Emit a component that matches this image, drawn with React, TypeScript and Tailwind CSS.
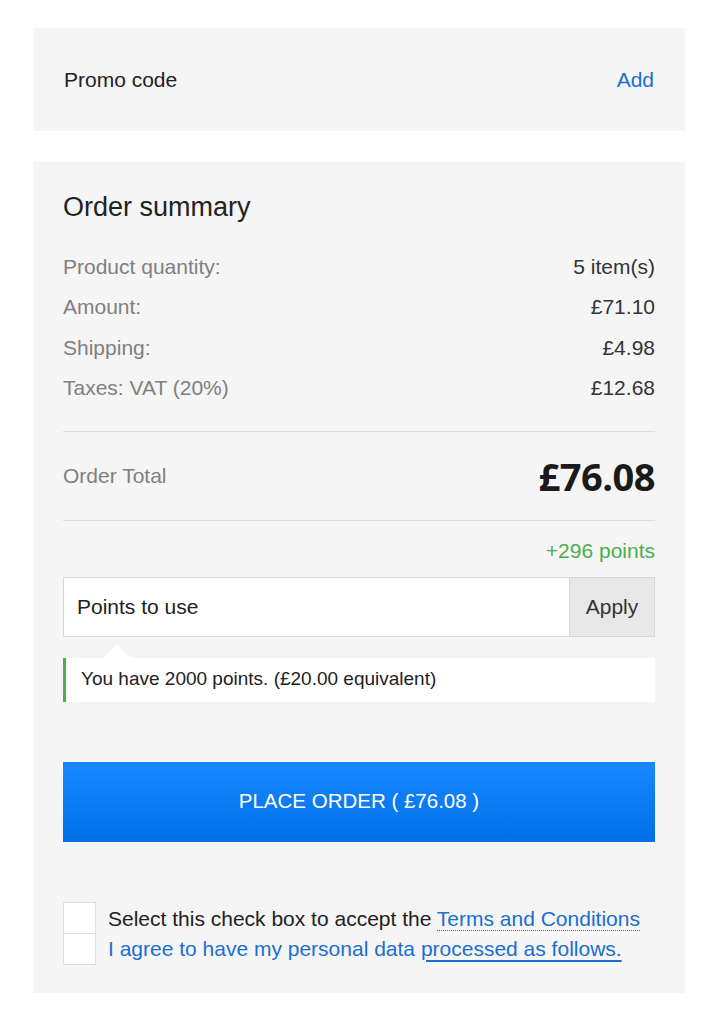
import React from 'react';

const rows = [
  { label: 'Product quantity:', value: '5 item(s)' },
  { label: 'Amount:', value: '£71.10' },
  { label: 'Shipping:', value: '£4.98' },
  { label: 'Taxes: VAT (20%)', value: '£12.68' },
];

export default function App() {
  return (
    <div className="min-h-[1024px] bg-white pl-[33px] pr-[27px] pt-[28px] font-['Liberation_Sans',Arial,sans-serif]">
      <div className="flex h-[103px] items-center justify-between bg-[#f5f5f5] px-[31px]">
        <span className="text-[21px] text-[#222]">Promo code</span>
        <a href="#" className="text-[21px] text-[#1a6fd1]">Add</a>
      </div>

      <div className="mt-[31px] bg-[#f5f5f5] px-[30px] pt-[29px] pb-[28px]">
        <h2 className="text-[27px] leading-[33px] text-[#222]">Order summary</h2>

        <div className="mt-[22px] flex flex-col">
          {rows.map((r) => (
            <div key={r.label} className="flex h-[40.5px] items-center justify-between text-[21px]">
              <span className="text-[#808080]">{r.label}</span>
              <span className="text-[#333]">{r.value}</span>
            </div>
          ))}
        </div>

        <div className="mt-[23px] border-t border-[#dcdcdc]" />
        <div className="flex h-[88px] items-center justify-between">
          <span className="text-[21px] text-[#808080]">Order Total</span>
          <span className="font-['Open_Sans',sans-serif] text-[38px] font-bold tracking-[-0.5px] text-[#1a1a1a]">£76.08</span>
        </div>
        <div className="border-t border-[#dcdcdc]" />

        <div className="mt-[14px] text-right text-[21px] text-[#4cae4c]">+296 points</div>

        <div className="mt-[10px] flex h-[60px] border border-[#d6d6d6] bg-white">
          <div className="flex flex-1 items-center pl-[13px] text-[21px] text-[#222]">Points to use</div>
          <div className="flex w-[85px] items-center justify-center border-l border-[#d6d6d6] bg-[#e8e8e8] text-[21px] text-[#333]">Apply</div>
        </div>

        <div className="relative mt-[21px]">
          <div className="absolute -top-[13px] left-[40px] h-0 w-0 border-x-[14px] border-b-[13px] border-x-transparent border-b-white" />
          <div className="flex h-[44px] items-center border-l-[3px] border-[#4cae4c] bg-white pl-[15px] text-[19px] text-[#222]">
            You have 2000 points. (£20.00 equivalent)
          </div>
        </div>

        <button className="mt-[60px] flex h-[80px] w-full items-center justify-center bg-gradient-to-b from-[#1888ff] to-[#0070e6] text-[20.5px] text-white">
          PLACE ORDER ( £76.08 )
        </button>

        <div className="mt-[60px] flex">
          <div className="flex flex-col">
            <div className="h-[32px] w-[33px] border border-[#dedede] bg-white" />
            <div className="h-[31px] w-[33px] border border-t-0 border-[#dedede] bg-white" />
          </div>
          <div className="ml-[12px] flex flex-col pt-[2px] text-[21px] leading-[30px]">
            <span className="whitespace-nowrap text-[#222]">
              Select this check box to accept the{' '}
              <a href="#" className="border-b border-dotted border-[#1a6fd1] text-[#1a6fd1]">Terms and Conditions</a>
            </span>
            <span className="whitespace-nowrap text-[#1a6fd1]">
              I agree to have my personal data{' '}
              <a href="#" className="underline decoration-[2px] underline-offset-[4px]">processed as follows.</a>
            </span>
          </div>
        </div>
      </div>
    </div>
  );
}
